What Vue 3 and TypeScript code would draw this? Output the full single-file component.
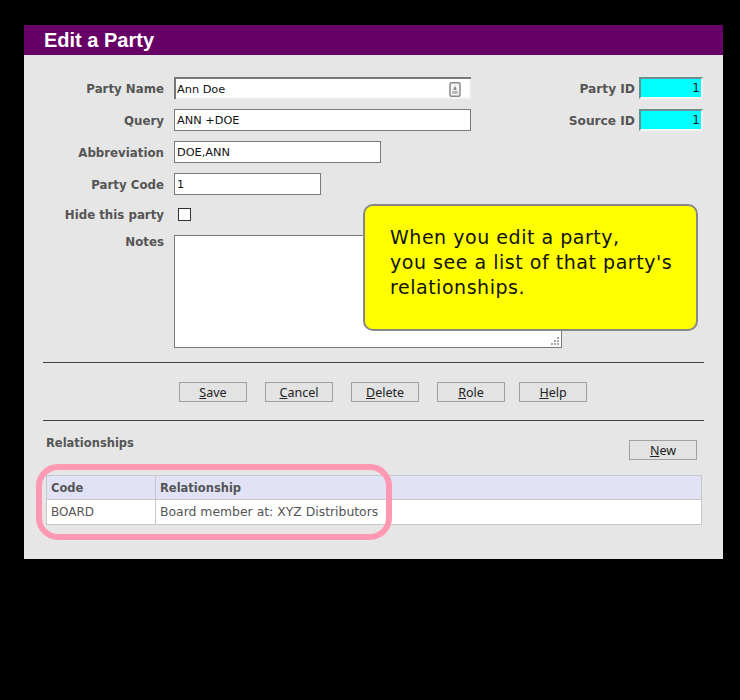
<script setup lang="ts">
const buttons: { key: string; rest: string }[] = [
  { key: 'S', rest: 'ave' },
  { key: 'C', rest: 'ancel' },
  { key: 'D', rest: 'elete' },
  { key: 'R', rest: 'ole' },
  { key: 'H', rest: 'elp' },
]
const gripDots: [number, number][] = [
  [6, 0],
  [3, 3], [6, 3],
  [0, 6], [3, 6], [6, 6],
]
</script>

<template>
  <div class="panel">
    <h1 class="title">Edit a Party</h1>
    <div class="body">
      <div class="top">
        <div class="form">
          <label class="lbl">Party Name</label>
          <div class="sunken w296">
            <span>Ann Doe</span>
            <svg class="contact" width="12" height="15" viewBox="0 0 12 15">
              <rect x="1" y="0.75" width="10" height="13.5" rx="1.5" fill="#f6f6f6" stroke="#8a8a8a" stroke-width="1.5" />
              <path d="M6 3.5 L7.8 8 H4.2 Z" fill="#8a8a8a" />
              <rect x="3.2" y="9" width="5.6" height="2.8" fill="#b5b5b5" />
            </svg>
          </div>
          <label class="lbl">Query</label>
          <input class="field w296" value="ANN +DOE" />
          <label class="lbl">Abbreviation</label>
          <input class="field w206" value="DOE,ANN" />
          <label class="lbl">Party Code</label>
          <input class="field w146" value="1" />
          <label class="lbl hideLbl">Hide this party</label>
          <div class="checkRow"><span class="check"></span></div>
          <label class="lbl notesLbl">Notes</label>
          <div class="notesWrap">
            <textarea class="notes"></textarea>
            <svg class="grip" width="8" height="8" viewBox="0 0 8 8">
              <rect v-for="d in gripDots" :key="d.join()" :x="d[0]" :y="d[1]" width="2" height="2" fill="#a8a8a8" />
            </svg>
          </div>
        </div>
        <div class="ids">
          <label class="lbl idLbl">Party ID</label>
          <div class="idField">1</div>
          <label class="lbl idLbl">Source ID</label>
          <div class="idField">1</div>
        </div>
      </div>

      <div class="callout">When you edit a party,<br />you see a list of that party's<br />relationships.</div>

      <hr class="rule firstRule" />
      <div class="actions">
        <button v-for="b in buttons" :key="b.key" class="btn"><u>{{ b.key }}</u>{{ b.rest }}</button>
      </div>
      <hr class="rule" />

      <div class="relHead">
        <span class="relTitle">Relationships</span>
        <button class="btn"><u>N</u>ew</button>
      </div>

      <div class="table">
        <div class="th c1">Code</div>
        <div class="th c2">Relationship</div>
        <div class="td c1">BOARD</div>
        <div class="td c2">Board member at: XYZ Distributors</div>
      </div>
      <div class="highlight"></div>
    </div>
  </div>
</template>

<style>
html, body { background: #000; }
</style>

<style scoped>
.panel {
  position: relative;
  box-sizing: border-box;
  width: 699px;
  height: 534px;
  margin: 25px 0 0 24px;
  background: #e6e6e6;
  font-family: "DejaVu Sans", sans-serif;
  font-size: 12px;
  color: #111;
}
.title {
  margin: 0;
  height: 30px;
  padding-left: 20px;
  background: #660066;
  color: #fff;
  font: bold 20px/30px "Liberation Sans", sans-serif;
}
.body { position: relative; padding: 22px 19px 0 19px; height: 482px; box-sizing: content-box; }
.top { display: flex; height: 271px; }
.form {
  display: grid;
  grid-template-columns: 121px auto;
  grid-template-rows: 22px 22px 22px 22px 20px 113px;
  column-gap: 10px;
  row-gap: 10px;
  align-items: center;
  justify-items: start;
}
.lbl {
  justify-self: end;
  padding-top: 2px;
  font-weight: bold;
  color: #555;
  font-size: 11.8px;
  white-space: nowrap;
}
.idLbl { font-size: 12.2px; }
.hideLbl { margin-bottom: 2px; }
.field, .sunken {
  box-sizing: border-box;
  height: 22px;
  padding: 0 2px;
  background: #fff;
  font: 11.3px "DejaVu Sans", sans-serif;
  color: #111;
  border: 1px solid #7a7a7a;
  outline: none;
}
.sunken {
  display: flex;
  align-items: center;
  justify-content: space-between;
  padding: 0 10px 0 1px;
  border-width: 2px 0 0 2px;
  border-color: #777;
  background: #fff;
  box-shadow: inset 0 -2px 0 #f3f3f3, inset -2px 0 0 #f3f3f3;
}
.contact { display: block; }
.w296 { width: 297px; }
.w206 { width: 207px; }
.w146 { width: 147px; }
.checkRow { box-sizing: border-box; height: 20px; padding: 0 0 2px 4px; display: flex; align-items: center; }
.check {
  display: block;
  width: 11px;
  height: 11px;
  border: 1px solid #333;
  background: #fff;
}
.notesLbl { align-self: start; padding-top: 0; }
.notesWrap { position: relative; width: 388px; height: 113px; align-self: start; }
.notes {
  display: block;
  box-sizing: border-box;
  width: 388px;
  height: 113px;
  margin: 0;
  background: #fff;
  border: 1px solid #7a7a7a;
  outline: none;
  resize: none;
}
.grip { position: absolute; right: 3px; bottom: 3px; }
.ids {
  display: grid;
  grid-template-columns: auto 64px;
  column-gap: 4px;
  row-gap: 10px;
  grid-auto-rows: 22px;
  align-items: center;
  margin-left: auto;
  align-content: start;
  margin-right: 1px;
}
.idField {
  box-sizing: border-box;
  height: 22px;
  padding-right: 1px;
  background: #00ffff;
  border-style: solid;
  border-width: 2px;
  border-color: #6b8f8f #f3f3f3 #f3f3f3 #6b8f8f;
  text-align: right;
  line-height: 19px;
  font-size: 12px;
}
.callout {
  position: absolute;
  left: 339px;
  top: 149px;
  box-sizing: border-box;
  width: 335px;
  height: 127px;
  padding: 19px 12px 0 25px;
  background: #ffff00;
  border: 2px solid #888;
  border-radius: 10px;
  font-size: 19px;
  letter-spacing: 0.53px;
  line-height: 25px;
  color: #111;
  white-space: nowrap;
}
.rule {
  margin: 0;
  height: 1px;
  border: 0;
  background: #444;
}
.firstRule { margin-top: 14px; }
.actions {
  display: flex;
  gap: 18px;
  height: 57px;
  box-sizing: border-box;
  padding: 19px 0 0 136px;
}
.actions .btn:last-child { margin-left: -4px; }
.btn {
  box-sizing: border-box;
  width: 68px;
  height: 20px;
  padding: 1px 0 0;
  background: #e3e3e3;
  border: 1px solid #a0a0a0;
  font: 12.5px "Noto Sans", sans-serif;
  color: #222;
}
.relHead {
  display: flex;
  justify-content: space-between;
  padding: 15px 7px 0 3px;
  height: 39px;
}
.relTitle { font-weight: bold; color: #555; font-size: 11.5px; line-height: 15px; }
.relHead .btn { margin-top: 4px; }
.table {
  display: grid;
  grid-template-columns: 109px 1fr;
  grid-template-rows: 24px 24px;
  box-sizing: border-box;
  width: 656px;
  height: 50px;
  margin: 0 0 0 3px;
  border: 1px solid #c8c8c8;
}
.th, .td { padding-left: 4px; white-space: nowrap; }
.th { box-sizing: border-box; padding-top: 1px; background: #e2e2f6; font-weight: bold; font-size: 11.5px; line-height: 22px; color: #555; border-bottom: 1px solid #c8c8c8; }
.td { background: #fff; color: #555; line-height: 24px; }
.td.c2 { font-size: 12.4px; }
.c1 { border-right: 1px solid #c8c8c8; }
.highlight {
  position: absolute;
  left: 12px;
  top: 409px;
  box-sizing: border-box;
  width: 356px;
  height: 76px;
  border: 6px solid #ff99b3;
  border-radius: 22px;
}
</style>
